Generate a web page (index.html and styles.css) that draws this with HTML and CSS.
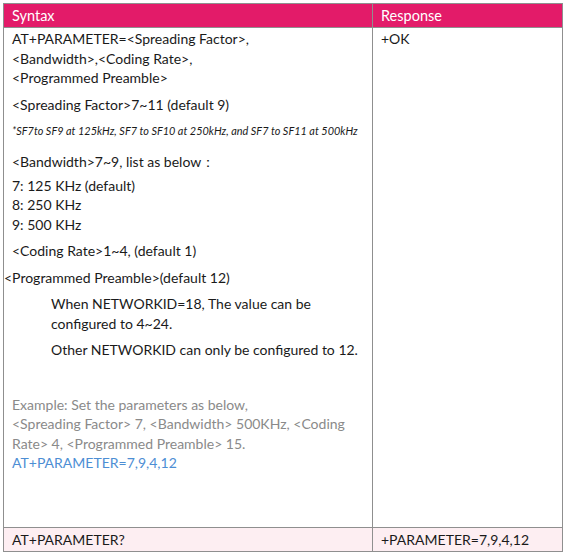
FILE: index.html
```html
<!DOCTYPE html>
<html>
<head>
<meta charset="utf-8">
<link rel="stylesheet" href="styles.css">
</head>
<body>
<table class="tbl">
  <tr class="head">
    <th class="c1">Syntax</th>
    <th class="c2">Response</th>
  </tr>
  <tr class="main">
    <td class="c1">
      <p>AT+PARAMETER=&lt;Spreading Factor&gt;,<br>&lt;Bandwidth&gt;,&lt;Coding Rate&gt;,<br>&lt;Programmed Preamble&gt;</p>
      <p>&lt;Spreading Factor&gt;7~11 (default 9)</p>
      <p class="note">*SF7to SF9 at 125kHz, SF7 to SF10 at 250kHz, and SF7 to SF11 at 500kHz</p>
      <p class="bw">&lt;Bandwidth&gt;7~9, list as below：</p>
      <p>7: 125 KHz (default)<br>8: 250 KHz<br>9: 500 KHz</p>
      <p>&lt;Coding Rate&gt;1~4, (default 1)</p>
      <p class="out">&lt;Programmed Preamble&gt;(default 12)</p>
      <p class="indent">When NETWORKID=18, The value can be<br>configured to 4~24.</p>
      <p class="indent">Other NETWORKID can only be configured to 12.</p>
      <p class="example">Example: Set the parameters as below,<br>&lt;Spreading Factor&gt; 7, &lt;Bandwidth&gt; 500KHz, &lt;Coding<br>Rate&gt; 4, &lt;Programmed Preamble&gt; 15.<br><span class="cmd">AT+PARAMETER=7,9,4,12</span></p>
    </td>
    <td class="c2"><p>+OK</p></td>
  </tr>
  <tr class="query">
    <td class="c1">AT+PARAMETER?</td>
    <td class="c2">+PARAMETER=7,9,4,12</td>
  </tr>
</table>
</body>
</html>
```

FILE: styles.css
```css
html, body {
  margin: 0;
  padding: 0;
  background: #ffffff;
}
body {
  padding: 3px 0 0 3px;
  font-family: "Lato", "Open Sans", sans-serif;
  font-size: 14px;
  color: #1a1a1a;
}
.tbl {
  border-collapse: collapse;
  width: 560px;
  table-layout: fixed;
}
.tbl .c1 { width: 352px; }
.tbl th, .tbl td {
  border: 1px solid #8f8f8f;
  text-align: left;
  vertical-align: top;
  padding: 0 8px;
}
.head th {
  background: #e31b69;
  color: #ffffff;
  font-weight: normal;
  font-size: 14.5px;
  height: 23px;
  line-height: 23px;
}
.main td {
  height: 498px;
  padding-top: 1px;
}
.main p {
  margin: 0 0 7px 0;
  line-height: 19.5px;
}
.main p.note {
  font-style: italic;
  font-size: 10.9px;
  margin-bottom: 11px;
}
.main p.bw { margin-bottom: 4.5px; }
.main p.out { margin-left: -8px; }
.main p.indent { padding-left: 39px; }
.main p.example {
  color: #8a8a8a;
  margin-top: 35px;
}
.cmd { color: #4d8ed4; }
.query td {
  background: #fdeef2;
  height: 23px;
  line-height: 23px;
}
```
